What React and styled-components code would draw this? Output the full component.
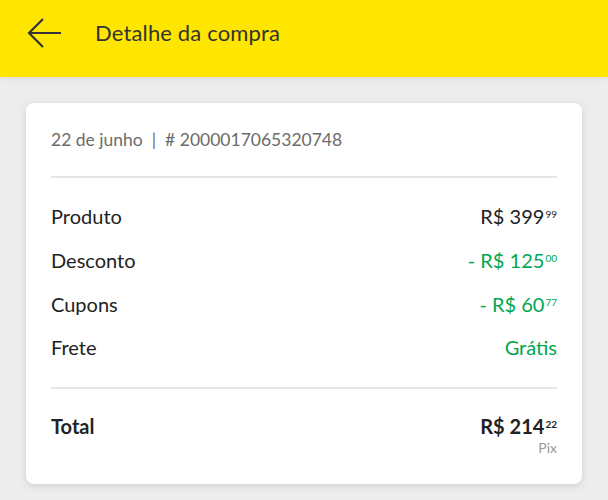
import React from "react";
import styled, { createGlobalStyle } from "styled-components";

const Global = createGlobalStyle`
  html, body { margin: 0; padding: 0; background: #ededed; }
  body { font-family: Lato, "Open Sans", "Liberation Sans", sans-serif; }
`;

const Page = styled.div`
  width: 608px;
  min-height: 500px;
  background: #ededed;
`;

const Header = styled.header`
  height: 77px;
  background: #ffe600;
  display: flex;
  align-items: center;
  padding: 0 0 0 27px;
  box-sizing: border-box;
  box-shadow: 0 1px 6px rgba(0, 0, 0, 0.1);
  position: relative;
`;

const Back = styled.button`
  background: none;
  border: none;
  padding: 0;
  width: 35px;
  height: 32px;
  display: flex;
  align-items: center;
  margin-right: 33px;
  margin-bottom: 12px;
  cursor: pointer;
`;

const Title = styled.h1`
  margin: 0 0 12px 0;
  font-size: 22px;
  font-weight: 400;
  color: #333;
  letter-spacing: 0.15px;
`;

const Content = styled.main`
  padding: 26px 26px 16px 26px;
`;

const Card = styled.section`
  background: #fff;
  border-radius: 8px;
  box-shadow: 0 2px 8px rgba(0, 0, 0, 0.12);
  padding: 25px 25px 28px 25px;
`;

const Meta = styled.div`
  font-size: 17.5px;
  color: #6b6b6b;
  line-height: 24px;
  padding-bottom: 24px;
  border-bottom: 2px solid #e6e6e6;
`;

const Sep = styled.span`
  margin: 0 9px;
`;

const Lines = styled.div`
  padding: 25px 0 26px;
  border-bottom: 2px solid #e6e6e6;
  display: flex;
  flex-direction: column;
  gap: 17.3px;
`;

const Row = styled.div`
  display: flex;
  justify-content: space-between;
  align-items: flex-start;
  font-size: 20px;
  line-height: 26.5px;
  color: #222;
  font-weight: ${(p) => (p.$bold ? 700 : 400)};
`;

const Value = styled.div`
  color: ${(p) => (p.$green ? "#00a650" : "#222")};
  text-align: right;
`;

const Cents = styled.sup`
  font-size: 10px;
  vertical-align: top;
  position: relative;
  top: -2px;
  margin-left: 1px;
`;

const TotalBlock = styled.div`
  padding-top: 24px;
`;

const Method = styled.div`
  font-size: 14px;
  color: #999;
  text-align: right;
  margin-top: 0;
`;

function Money({ value, cents, neg }) {
  return (
    <>
      {neg ? "- " : ""}R$ {value}
      <Cents>{cents}</Cents>
    </>
  );
}

const lines = [
  { label: "Produto", value: "399", cents: "99" },
  { label: "Desconto", value: "125", cents: "00", neg: true, green: true },
  { label: "Cupons", value: "60", cents: "77", neg: true, green: true },
  { label: "Frete", text: "Grátis", green: true },
];

export default function App() {
  return (
    <Page>
      <Global />
      <Header>
        <Back aria-label="Voltar">
          <svg width="35" height="32" viewBox="0 0 35 32" fill="none">
            <path d="M34 16H2M16 2L2 16l14 14" stroke="#333" strokeWidth="2.2" />
          </svg>
        </Back>
        <Title>Detalhe da compra</Title>
      </Header>
      <Content>
        <Card>
          <Meta>
            22 de junho<Sep>|</Sep># 2000017065320748
          </Meta>
          <Lines>
            {lines.map((l) => (
              <Row key={l.label}>
                <span>{l.label}</span>
                <Value $green={l.green}>
                  {l.text ? l.text : <Money value={l.value} cents={l.cents} neg={l.neg} />}
                </Value>
              </Row>
            ))}
          </Lines>
          <TotalBlock>
            <Row $bold>
              <span>Total</span>
              <Value>
                <Money value="214" cents="22" />
              </Value>
            </Row>
            <Method>Pix</Method>
          </TotalBlock>
        </Card>
      </Content>
    </Page>
  );
}
